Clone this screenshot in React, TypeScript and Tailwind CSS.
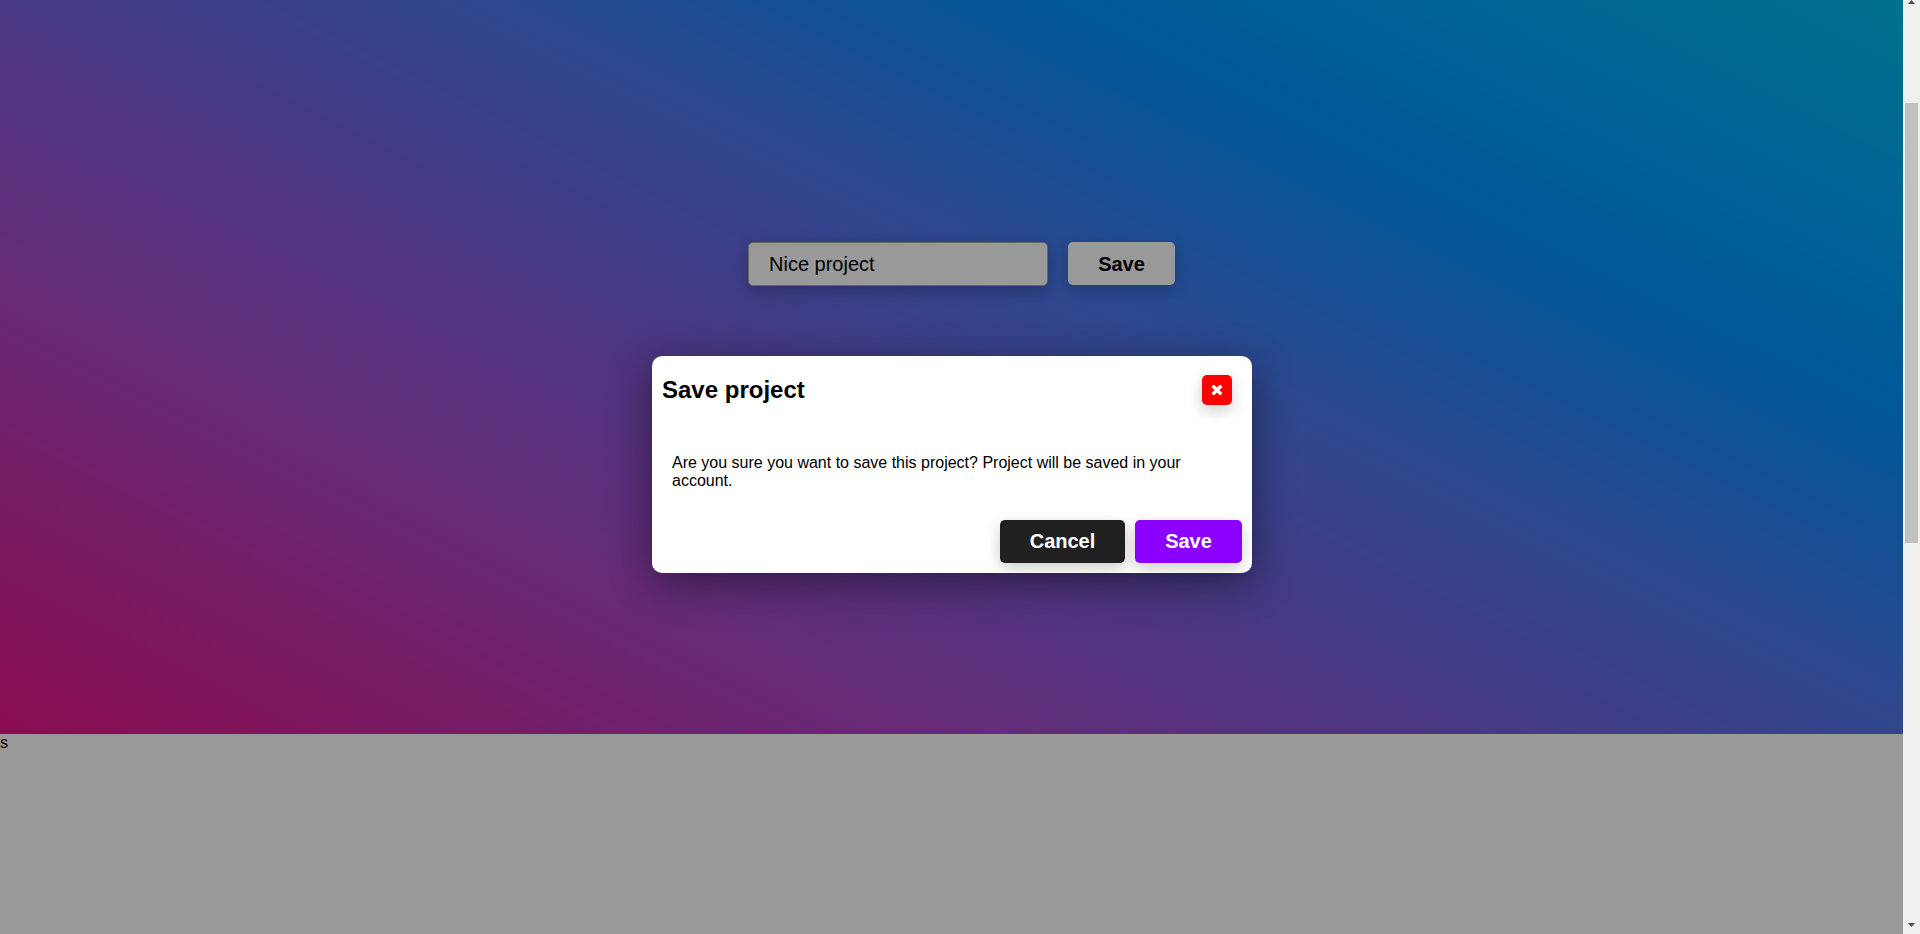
const button =
  "h-[43px] rounded-[5px] text-[20px] font-bold shadow-[0_5px_15px_rgba(0,0,0,0.2)]";

function CloseIcon() {
  return (
    <svg className="size-[16px]" viewBox="0 64 1792 1792" fill="currentColor">
      <path d="M1490 1322q0 40-28 68l-136 136q-28 28-68 28t-68-28l-294-294-294 294q-28 28-68 28t-68-28l-136-136q-28-28-28-68t28-68l294-294-294-294q-28-28-28-68t28-68l136-136q28-28 68-28t68 28l294 294 294-294q28-28 68-28t68 28l136 136q28 28 28 68t-28 68l-294 294 294 294q28 28 28 68z" />
    </svg>
  );
}

export default function App() {
  return (
    <div className="relative flex h-[934px] w-full overflow-hidden bg-white font-['Liberation_Sans',Arial,sans-serif] text-black">
      <main className="relative flex-1 overflow-hidden">
        <section className="-mt-[208px] flex h-[942px] items-start justify-center gap-[20px] bg-[linear-gradient(to_top_right,#e81586_0%,#a849c8_25%,#7f5ad8_37%,#4b78ee_52%,#008fff_66%,#00a8fa_78%,#00d2d8_100%)] pt-[450px]">
          <input
            className="ml-[20px] h-[44px] w-[300px] rounded-[5px] border border-[#aaa] bg-white px-[20px] text-[20px] shadow-[0_5px_15px_rgba(0,0,0,0.25)]"
            defaultValue="Nice project"
          />
          <button className={`${button} w-[107px] bg-white`}>Save</button>
        </section>
        <p className="text-[16px] leading-[18px]">s</p>
        <div className="absolute inset-0 bg-black/40" />
        <div className="absolute inset-0 flex items-start justify-center pt-[355.5px] pl-px">
          <div
            role="dialog"
            className="flex h-[217px] w-[600px] flex-col rounded-[10px] bg-white shadow-[0_10px_40px_rgba(0,0,0,0.45)]"
          >
            <header className="flex items-center justify-between pt-[19px] pr-[20px] pl-[10px]">
              <h2 className="text-[24px] leading-[28px] font-bold">Save project</h2>
              <button
                aria-label="Close"
                className="flex size-[30px] items-center justify-center rounded-[5px] bg-[#ff0000] text-white shadow-[0_5px_15px_rgba(0,0,0,0.2)]"
              >
                <CloseIcon />
              </button>
            </header>
            <p className="mt-[49px] px-[20px] text-[16px] leading-[18px]">
              Are you sure you want to save this project? Project will be saved in your account.
            </p>
            <footer className="mt-auto flex justify-end gap-[10px] p-[10px]">
              <button className={`${button} w-[125px] bg-[#202020] text-white`}>Cancel</button>
              <button className={`${button} w-[107px] bg-[#8c00ff] text-white`}>Save</button>
            </footer>
          </div>
        </div>
      </main>
      <aside className="flex w-[17px] flex-col items-center bg-[#f0f0f0]">
        <svg className="h-[4px] w-[7px]" viewBox="0 0 7 4">
          <path d="M3.5 0 7 4H0Z" fill="#505050" />
        </svg>
        <div className="mt-[99px] h-[440px] w-[13px] bg-[#c1c1c1]" />
        <svg className="mt-auto mb-[7px] h-[4px] w-[7px]" viewBox="0 0 7 4">
          <path d="M0 0H7L3.5 4Z" fill="#505050" />
        </svg>
      </aside>
    </div>
  );
}
